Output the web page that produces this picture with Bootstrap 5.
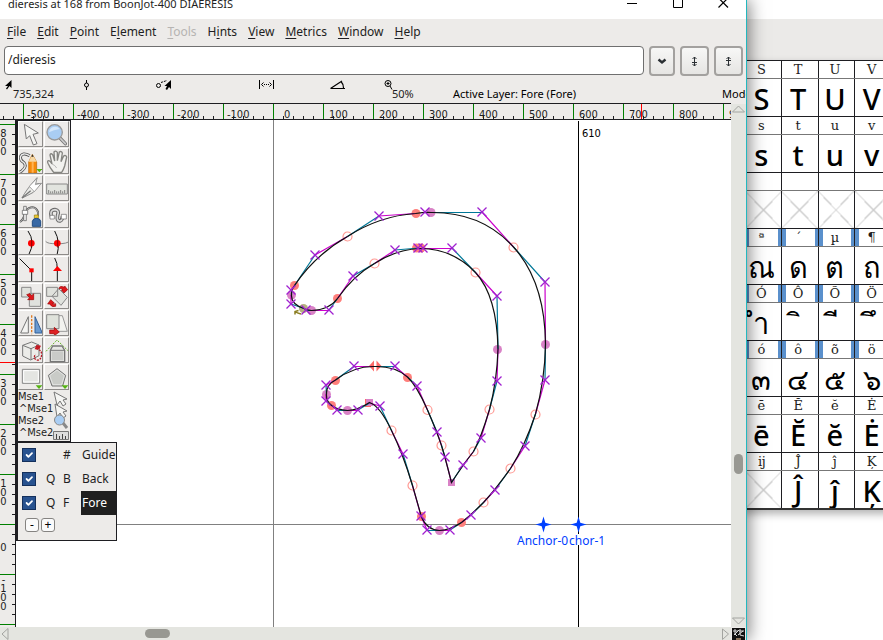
<!DOCTYPE html>
<html lang="en">
<head>
<meta charset="utf-8">
<meta name="viewport" content="width=device-width, initial-scale=1">
<title>dieresis at 168 from BoonJot-400</title>
<link href="https://cdn.jsdelivr.net/npm/bootstrap@5.3.0/dist/css/bootstrap.min.css" rel="stylesheet">
<style>
:root{--chrome:#edebe9;--ink:#1e1e22;--trough:#e4e5e0}
body{font:12px/16px "Noto Sans","Open Sans",sans-serif;color:var(--ink);background:#fff}
.editor{min-width:0;border-right:1px solid #22b8bf;box-shadow:2px 0 16px rgba(0,0,0,.5);z-index:2;background:var(--chrome)}
.titlebar,.menus,.entry,.status{flex:none}
.titlebar{height:19px;background:#fff;padding-left:8px}
.titlebar .caption{margin-top:-4px;font-size:11px;white-space:nowrap}
.titlebar button,.menus button,.tool,.scroll button{border:0;background:none;padding:0;color:inherit;line-height:inherit}
.winctl{gap:35px;padding-right:17px}
.winctl button{display:flex}
.winctl svg,.tool svg,.scroll svg,.status svg,.bindings svg{display:block;flex:none}
.menus{height:27px;gap:11px;padding:0 0 2px 7px}
.menus button:disabled{color:#b6b4b2}
.menus u{text-underline-offset:2px}
.entry{gap:5px;padding:0 3px 0 4px}
.entry input{height:29px;border:1px solid #6f6f6f;border-radius:4px;padding:0 3px 2px;font-size:12px;color:var(--ink);box-shadow:none}
.entry .btn{height:30px;width:29px;flex:none;padding:0;border:2px solid #a3a19f;border-radius:4px;background:linear-gradient(#f7f7f6,#e6e5e3);font-size:12px;line-height:12px}
.entry .btn:first-of-type{width:26px}
.status{height:27px;display:grid;grid-template-columns:79px 72px 103px 71px 54px 69px minmax(0,1fr) 24px;padding:4px 0 0 5px;font:11px/13px "Noto Sans",sans-serif;white-space:nowrap;overflow:hidden}
.status .reading{margin:-3px 0 0 8px}
.status .lower{padding-top:7px;color:#000}
.work{display:grid;grid-template-columns:minmax(0,1fr) 15px;grid-template-rows:17px minmax(0,1fr) 13px;min-height:0}
.hruler{border-top:1px solid var(--ink);border-bottom:1px solid var(--ink);padding-left:23px;overflow:hidden;position:relative;font:11px/21px "DejaVu Sans Condensed","DejaVu Sans",sans-serif;background:repeating-linear-gradient(90deg,var(--ink) 0 1px,transparent 1px 10px) 3px 12px/100% 3px no-repeat}
.hruler span{flex:0 0 50px;border-left:1px solid green;padding-left:3px}
.hruler .pos{padding-left:5px}
.hruler .zero{padding-left:10px}
.hruler i{position:absolute;left:641px;top:0;width:1px;height:15px;background:red}
.body-row{min-height:0}
.vruler{flex:0 0 16px;border-right:1px solid var(--ink);padding-top:4px;overflow:hidden;position:relative;font:11px/9px "DejaVu Sans Condensed","DejaVu Sans",sans-serif;background:repeating-linear-gradient(var(--ink) 0 1px,transparent 1px 10px) 12px 4px/3px 100% no-repeat}
.vruler span{flex:0 0 50px;border-top:1px solid green;padding-top:4px}
.vruler b{display:block;width:7px;font-weight:400;word-break:break-all;text-align:center}
.vruler .zero{padding-top:18px}
.vruler .neg{padding-top:0}
.vruler i{position:absolute;left:0;top:242px;width:15px;height:1px;background:red}
.canvas{background:#fff;position:relative;overflow:hidden}
.outline-view{position:absolute;inset:0;width:100%;height:100%}
.palettes{position:absolute;left:0;top:-1px}
.toolbox,.layers{border:1px solid var(--ink);background:var(--chrome);border-left-width:2px}
.toolbox{width:55px;border-top-width:2px}
.toolgrid{display:grid;grid-template-columns:1fr 1fr;grid-auto-rows:27px}
.toolgrid .tool{margin:0 1px 1px 0;border:1px solid;border-color:#fff #8d8b89 #8d8b89 #fff;overflow:hidden}
.bindings{font:11px/12px "DejaVu Sans Condensed","DejaVu Sans",sans-serif;height:50px;position:relative}
.bindings .shifted{padding-left:1px}
.bindings svg{position:absolute;right:1px;top:0}
.layers{width:101px;height:99px}
.layerrow{display:grid;grid-template-columns:24px 17px 18px 1fr;height:24px;align-items:center;padding-left:4px}
.layerrow .form-check-input{width:14px;height:14px;margin:0;border-radius:0;border:1px solid #14305c;box-shadow:none}
.layerrow .form-check-input:checked{background-color:#28528f}
.layerrow .lname{line-height:24px;padding-left:1px;font-size:12px}
.layerrow .active{background:#202020;color:#fff}
.pmrow{gap:2px;padding:3px 0 0 7px}
.pm{width:14px;height:14px;padding:0;border:1px solid #858381;border-radius:3px;background:#fafafa;font-size:12px;line-height:10px}
.scroll{background:var(--trough)}
.thumb{background:#989892;border-radius:5px}
.vscroll{grid-row:1/3;grid-column:2;margin-top:1px}
.vscroll .thumb{width:9px;height:20px}
.vscroll .before{flex:342 0 0}
.vscroll .after{flex:143 0 0}
.hscroll .thumb{height:9px;width:25px;margin-left:136px}
.fontview{flex:0 0 136px;overflow:hidden}
.fonthead{height:60px;background:linear-gradient(#fff 19px,#ebeae8 19px)}
.glyphs{width:148px;margin-left:-3px;table-layout:fixed;border-collapse:collapse;border-bottom:2px solid #333;box-shadow:0 4px 8px rgba(0,0,0,.3)}
.glyphs th,.glyphs td{padding:0 3px 0 0;text-align:center;border:1px solid var(--ink);overflow:hidden}
.glyphs th{height:18px;font:13px/17px "DejaVu Serif",serif;border-bottom-color:#777}
.glyphs td{height:38px;font:29px/40px "Noto Sans","DejaVu Sans",sans-serif;font-weight:500;color:#000;border-top-color:#777}
.glyphs td div{height:37px;overflow:hidden}
.glyphs .chosen th{box-shadow:inset 4px 0 #5a90cc,inset -3px 0 #5a90cc}
.glyphs .blank{background:linear-gradient(to top right,transparent 49%,#ccc 49% 51%,transparent 51%),linear-gradient(to bottom right,transparent 49%,#ccc 49% 51%,transparent 51%)}
</style>
</head>
<body class="vh-100 overflow-hidden d-flex">
<main class="editor d-flex flex-column flex-grow-1 position-relative">
  <header class="titlebar d-flex justify-content-between overflow-hidden">
    <div class="caption">dieresis at 168 from BoonJot-400 DIAERESIS</div>
    <div class="winctl d-flex">
      <button aria-label="Minimize"><svg width="11" height="19"><path d="M0 3.500H10" stroke="#000"/></svg></button>
      <button aria-label="Maximize"><svg width="10" height="19"><path d="M.5-2V7.500H9.500V-2z" fill="none" stroke="#000"/></svg></button>
      <button aria-label="Close"><svg width="11" height="19"><path d="M.5-2L10 7.500M10-2L.5 7.500" stroke="#000" stroke-width="1.200"/></svg></button>
    </div>
  </header>
  <nav class="menus d-flex align-items-center">
    <button><u>F</u>ile</button><button><u>E</u>dit</button><button><u>P</u>oint</button><button>E<u>l</u>ement</button><button disabled><u>T</u>ools</button><button>H<u>i</u>nts</button><button><u>V</u>iew</button><button><u>M</u>etrics</button><button><u>W</u>indow</button><button><u>H</u>elp</button>
  </nav>
  <div class="entry d-flex">
    <input class="form-control" type="text" value="/dieresis" aria-label="Glyph name">
    <button class="btn" aria-label="History"><svg width="10" height="7"><path d="M1.500 1.500L5 4.500L8.500 1.500" fill="none" stroke="#2a2f33" stroke-width="2.400"/></svg></button>
    <button class="btn" aria-label="Previous word"><svg width="7" height="11"><path d="M3.500 1V10M1.500 3L3.500 1L5.500 3M1.500 8L3.500 10L5.500 8M1 6.500H6" fill="none" stroke="#2a2f33"/></svg></button>
    <button class="btn" aria-label="Next word"><svg width="7" height="11"><path d="M3.500 1V10M1.500 3L3.500 1L5.500 3M1.500 8L3.500 10L5.500 8M1 4.500H6" fill="none" stroke="#2a2f33"/></svg></button>
  </div>
  <div class="status">
    <div><svg width="8" height="10"><path d="M6.500 0V8L4.500 6L2 9.500L1 8.500L3 6H0z"/></svg><div class="reading">735,324</div></div>
    <div><svg width="6" height="10"><path d="M2.500 0V10" stroke="#000"/><circle cx="2.500" cy="5" r="2" fill="#edebe9" stroke="#000"/></svg></div>
    <div><svg width="16" height="10"><circle cx="2.500" cy="5.500" r="2" fill="none" stroke="#000"/><path d="M5 2.500L11 .5" stroke="#000" stroke-dasharray="2 1"/><path d="M15 0V9L13 7L11 10L9.500 9L11 6H8.500z"/></svg></div>
    <div><svg width="16" height="9"><path d="M.5 0V9M14.500 0V9M5 4.500H6M7 4.500H8M9 4.500H10M4.500 2.500L2.500 4.500L4.500 6.500M10.500 2.500L12.500 4.500L10.500 6.500" fill="none" stroke="#000"/></svg></div>
    <div><svg width="16" height="10"><path d="M.5 8.500H15M.5 8.500L12 1M11 1.500Q13.500 4 13.500 8" fill="none" stroke="#000" stroke-width="1.200"/></svg></div>
    <div><svg width="9" height="10"><circle cx="4" cy="3.500" r="3" fill="none" stroke="#000"/><path d="M2.500 3.500H5.500M4 2V5M6 6L8 9.500" stroke="#000"/></svg><div class="reading">50%</div></div>
    <div class="lower">Active Layer: Fore (Fore)</div>
    <div class="lower">Mode</div>
  </div>
  <section class="work flex-grow-1">
    <div class="hruler d-flex"><span>-500</span><span>-400</span><span>-300</span><span>-200</span><span>-100</span><span class="zero">0</span><span class="pos">100</span><span class="pos">200</span><span class="pos">300</span><span class="pos">400</span><span class="pos">500</span><span class="pos">600</span><span class="pos">700</span><span class="pos">800</span><span class="pos">9</span><i></i></div>
    <div class="body-row d-flex">
      <div class="vruler d-flex flex-column"><span><b>800</b></span><span><b>700</b></span><span><b>600</b></span><span><b>500</b></span><span><b>400</b></span><span><b>300</b></span><span><b>200</b></span><span><b>100</b></span><span class="zero"><b>0</b></span><span class="neg"><b>- 100</b></span><span class="neg"></span><i></i></div>
      <div class="canvas flex-grow-1">
        <svg class="outline-view" role="img" aria-label="Glyph outline">
          <defs>
            <marker id="mx" markerUnits="userSpaceOnUse" markerWidth="12" markerHeight="12" refX="6" refY="6"><path d="M1.500 1.500L10.500 10.500M10.500 1.500L1.500 10.500" stroke="#a020d0" stroke-width="1.300"/></marker>
            <marker id="mo" markerUnits="userSpaceOnUse" markerWidth="12" markerHeight="12" refX="6" refY="6"><circle cx="6" cy="6" r="4.500" fill="none" stroke="#ff9a94" stroke-width="1.200"/></marker>
            <marker id="mr" markerUnits="userSpaceOnUse" markerWidth="12" markerHeight="12" refX="6" refY="6"><circle cx="6" cy="6" r="4.500" fill="#ff7f7b"/></marker>
            <marker id="mp" markerUnits="userSpaceOnUse" markerWidth="12" markerHeight="12" refX="6" refY="6"><circle cx="6" cy="6" r="4.500" fill="#d982c6"/></marker>
            <path id="star" d="M0-8L1.800-1.800L8 0L1.800 1.800L0 8L-1.800 1.800L-8 0L-1.800-1.800z" fill="#0040ff"/>
          </defs>
          <g transform="translate(-16 -120)" fill="none">
            <path d="M273.500 120V2000M0 524.500H3000" stroke="#808080"/>
            <path d="M578.500 121V2000" stroke="#000"/>
            <g marker-start="url(#mr)" marker-mid="url(#mr)" marker-end="url(#mr)"><path d="M416 213.500L294.500 285.500L337.500 298.500L416.500 248L421 248L335.500 380.500L407.500 377.500L331.500 405.500L421.500 516.500L461.500 522.500"/></g>
            <path d="M369 366L374 360.500V371.500zM381.500 366L376.500 360.500V371.500zM365 399H371V407H365z" fill="#ff6a68"/>
            <g marker-start="url(#mp)" marker-mid="url(#mp)" marker-end="url(#mp)"><path d="M431 212.500L545.500 344.500L497.500 349.500L291.500 295L311.500 310.500L326.500 394.500L347.500 410.500L439.500 530.500"/></g>
            <path d="M366 399H373V406H366zM448 479H455V486H448z" fill="#d982c6"/>
            <circle cx="303.500" cy="308.500" r="4.500" fill="#b5b080"/>
            <g marker-start="url(#mo)" marker-mid="url(#mo)" marker-end="url(#mo)"><path d="M347.500 236.500L374.500 263.500L513.500 247.500L475.500 272.500L535.500 414.500L510.500 468.500L483.500 502.500L412.500 485.500L391.500 430.500L427.500 410L441.500 445.500L473.500 451.500L489.500 409.500"/></g>
            <path d="M431 212.500H482M513.500 247L545 282M545.500 344L545 380M535.500 414L525 446M510.500 468.500L495 490M483.500 502.500L471 515M461.500 522.500L450 530M439.500 530.500H427M412.500 485.500L403 454M391.500 430.500L380 406M369.500 403L358 410M347.500 410.500H337M331 405L326 401M326.500 394L326 385M335.500 380L354 366.500M375 366.500H395M407.500 377L417 386M427.500 410L437 432M441.500 445.500L445 457M451.500 482.500L463 465M473.500 451.500L481 438M489.500 409.500L497 381M498 349L497 296M475.500 272.500L452 248M419 248L395 250M374.500 263.500L353 276M337.500 298.500L329 310M311 310.500H306M304 308.500L291 304M291.500 295V290M294.500 285.500L315 255M347.500 236.500L379 216" stroke="#007898" stroke-width="1.200"/>
            <path d="M482 212L513.500 247M545 282.500L545.500 344M545 380L535.500 414M525 446L510.500 468.500M495 490L483.500 502.500M471 515L461.500 522.500M450 530.500H439.500M427 530L421 516L412.500 485.500M403 454L391.500 430.500M380 406L369.500 403M358 410.500H347.500M337 410L331 405M326 401V394M326 385L335.500 380M354 366.500H375M395 366.500L407.500 377M417 386L427.500 410M437 432L441.500 445.500M445 457L451.500 482.500M463 465L473.500 451.500M481 438L489.500 409.500M497 381L498 349M497 296L475.500 272.500M452 248.500H419M395 250L374.500 263.500M353 276L337.500 298.500M329 310.500H311M291 304V295M291 290L294.500 285.500M315 255L347.500 236.500M379 216L415.500 213.500" stroke="#cc00cc" stroke-width="1.200"/>
            <path d="M431 212.500Q482 212 513.500 247Q545 282 545.500 344Q545 380 535.500 414Q525 446 510.500 468.500Q495 490 483.500 502.500Q471 515 461.500 522.500Q450 530 439.500 530.500Q427 530 421.500 517Q421 515 412.500 485.500Q403 454 391.500 430.500Q380 406 369.500 402.500Q358 410 347.500 410.500Q337 410 331 405Q326 401 326.500 394Q326 385 335.500 380Q354 366 375 366.500Q395 366 407.500 377Q417 386 427.500 410Q437 432 441.500 445.500Q445 457 451.500 482.500Q463 465 473.500 451.500Q481 438 489.500 409.500Q497 381 498 349Q497 296 475.500 272.500Q452 248 419 248.500Q395 250 374.500 263.500Q353 276 337.500 298.500Q329 310 311.500 310.500Q306 310 304 308.500Q291 304 291.500 295Q291 290 294.500 285.500Q315 255 347.500 236.500Q379 216 415.500 213.500Q425 212 431 212.500z" stroke="#101010" stroke-width="1.200"/>
            <g marker-start="url(#mx)" marker-mid="url(#mx)" marker-end="url(#mx)"><path d="M425 212L482 212L545 282L545 380L525 446L495 490L471 515L450 530L427 530L421 516L403 454L380 406L358 410L337 410L326 401L326 385L354 366L395 366L417 386L437 432L445 457L463 465L481 438L497 381L497 296L452 248L423 248L418 248L395 250L353 276L329 310L306 310L291 304L291 290L315 255L379 216"/></g>
            <path d="M301 314Q297 313 295 311.500M295 314.500V311.500L298.500 310.500" stroke="#8a7d20" stroke-width="1.500"/>
            <path d="M517 534H604V545H517z" fill="#fff"/>
            <g font-family="Noto Sans,sans-serif" font-size="12" fill="#0040ff"><text x="517" y="545">Anchor-0</text><text x="569" y="545">chor-1</text></g>
            <text x="582" y="137" font-family="DejaVu Sans Condensed,DejaVu Sans,sans-serif" font-size="11" fill="#000">610</text>
            <use href="#star" x="543.500" y="524.500"/><use href="#star" x="578.500" y="524.500"/>
          </g>
        </svg>
        <aside class="palettes">
          <div class="toolbox">
            <div class="toolgrid">
              <button class="tool" aria-label="Pointer"><svg viewBox="0 0 75 75" width="25" height="25"><path d="M16 7L22 51L32 41L43 69L54 65L42 37L58 33z" fill="#f5f5f3" stroke="#777" stroke-width="3"/></svg></button>
              <button class="tool" aria-label="Magnify"><svg viewBox="0 0 75 75" width="25" height="25"><path d="M45 48L61 65" stroke="#777" stroke-width="10" stroke-linecap="round"/><path d="M45 48L61 65" stroke="#ccc" stroke-width="5" stroke-linecap="round"/><circle cx="29" cy="31" r="23" fill="#a9cdf3" stroke="#999" stroke-width="4"/><path d="M12 31A18 18 0 0 1 44 21Q26 24 12 31z" fill="#d4e7fb"/></svg></button>
              <button class="tool" aria-label="Freehand"><svg viewBox="0 0 75 75" width="25" height="25"><path d="M32 20Q10 8 4 24Q4 36 14 40Q26 52 8 66L3 69" fill="none" stroke="#555" stroke-width="9"/><path d="M32 20Q10 8 4 24Q4 36 14 40Q26 52 8 66L3 69" fill="none" stroke="#eee" stroke-width="4"/><path d="M29 39L40 16L53 39V72H29z" fill="#f58a0b" stroke="#b56405" stroke-width="2"/><path d="M29 38L40 16L53 38z" fill="#f6d8a4"/><path d="M37 23L40 16L44 23z" fill="#222"/><path d="M41 39V71" stroke="#ffb454" stroke-width="6"/><path d="M52 60H70L61 70z" fill="#54b313"/></svg></button>
              <button class="tool" aria-label="Hand"><svg viewBox="0 0 75 75" width="25" height="25"><path d="M23 66Q15 57 9 43Q6 35 11 35Q15 35 21 45L15 18Q17 11 23 17L29 36L27 9Q32 3 37 10V35L43 9Q49 5 52 12L48 38L56 21Q62 17 65 24L59 51Q56 61 50 70H26z" fill="#f2f2ef" stroke="#858581" stroke-width="4"/><path d="M21 45Q30 48 35 57" fill="none" stroke="#999" stroke-width="2"/></svg></button>
              <button class="tool" aria-label="Knife"><svg viewBox="0 0 75 75" width="25" height="25"><path d="M9 66Q20 43 54 5L49 24L67 22L43 49Q27 58 9 66z" fill="#ecece9" stroke="#888" stroke-width="3"/><path d="M31 31L46 47L67 22L49 26L54 7z" fill="#fff" stroke="#888" stroke-width="2"/><path d="M9 66L35 44" stroke="#777" stroke-width="4"/></svg></button>
              <button class="tool" aria-label="Ruler"><svg viewBox="0 0 75 75" width="25" height="25"><path d="M5 24H67V54H5z" fill="#e2e4df" stroke="#888" stroke-width="3"/><path d="M11 52V42M17 52V46M23 52V46M29 52V42M35 52V46M41 52V46M47 52V42M53 52V46M59 52V42" stroke="#555" stroke-width="2"/></svg></button>
              <button class="tool" aria-label="Pen"><svg viewBox="0 0 75 75" width="25" height="25"><path d="M3 57Q17 48 17 25Q45 0 57 27V40" fill="none" stroke="#555" stroke-width="6"/><path d="M3 57Q17 48 17 25Q45 0 57 27V40" fill="none" stroke="#ddd" stroke-width="2"/><path d="M14 10H22V53H14z" fill="#eee" stroke="#555" stroke-width="2"/><path d="M10 22H26V34H10z" fill="#fff" stroke="#555" stroke-width="2"/><path d="M46 36H58V46H46z" fill="#eecb35" stroke="#947a08" stroke-width="2"/><path d="M40 70V55Q42 46 52 46Q64 46 65 55V70z" fill="#3969a5" stroke="#234d82" stroke-width="3"/></svg></button>
              <button class="tool" aria-label="Spiro"><svg viewBox="0 0 75 75" width="25" height="25"><path d="M20 43Q12 21 30 20Q44 22 38 36Q34 55 45 54Q53 52 52 39" fill="none" stroke="#666" stroke-width="11"/><path d="M20 43Q12 21 30 20Q44 22 38 36Q34 55 45 54Q53 52 52 39" fill="none" stroke="#ddd" stroke-width="5"/><path d="M15 37H28V48H15zM49 34H64V48H49z" fill="#fff" stroke="#666" stroke-width="2"/></svg></button>
              <button class="tool" aria-label="Curve point"><svg viewBox="0 0 75 75" width="25" height="25"><path d="M27 3Q50 35 29 75" fill="none" stroke="#111" stroke-width="3"/><circle cx="37" cy="40" r="10" fill="red"/><path d="M38 28V53" stroke="#500" stroke-width="2"/></svg></button>
              <button class="tool" aria-label="HV curve point"><svg viewBox="0 0 75 75" width="25" height="25"><path d="M2 34Q7 42 37 41Q68 42 74 32" fill="none" stroke="#888" stroke-width="3"/><path d="M29 3Q47 35 36 75" fill="none" stroke="#111" stroke-width="3"/><circle cx="37" cy="40" r="10" fill="red"/><path d="M38 28V53" stroke="#500" stroke-width="2"/></svg></button>
              <button class="tool" aria-label="Corner point"><svg viewBox="0 0 75 75" width="25" height="25"><path d="M2 5L38 41V75" fill="none" stroke="#111" stroke-width="3"/><path d="M31 34H44V46H31z" fill="red"/></svg></button>
              <button class="tool" aria-label="Tangent point"><svg viewBox="0 0 75 75" width="25" height="25"><path d="M29 3Q38 17 37 40V75" fill="none" stroke="#111" stroke-width="3"/><path d="M24 42L37 27L51 42z" fill="red"/></svg></button>
              <button class="tool" aria-label="Scale"><svg viewBox="0 0 75 75" width="25" height="25"><path d="M8 10H36V39H8zM31 28H65V67H31z" fill="#e0e2dd" stroke="#888" stroke-width="3"/><path d="M23 32L32 29L38 35L44 29V47H26L32 41z" fill="#df171b" stroke="#900" stroke-width="2"/></svg></button>
              <button class="tool" aria-label="Rotate"><svg viewBox="0 0 75 75" width="25" height="25"><path d="M5 10H38V37H5zM41 14L67 40L48 64L21 37z" fill="#e0e2dd" stroke="#888" stroke-width="3"/><path d="M42 14Q43 3 59 10V6L68 17L57 27L49 18L54 17Q49 12 42 14zM32 67Q20 72 14 60H8L17 47L28 57L22 59Q26 62 32 59z" fill="#df171b" stroke="#900" stroke-width="2"/></svg></button>
              <button class="tool" aria-label="Flip"><svg viewBox="0 0 75 75" width="25" height="25"><path d="M5 66L28 17V66z" fill="#f4f4f2" stroke="#777" stroke-width="3"/><path d="M38 13V70" stroke="#df7a22" stroke-width="4" stroke-dasharray="7 4"/><path d="M48 66V17L70 66z" fill="#6a9ad0" stroke="#315f98" stroke-width="3"/></svg></button>
              <button class="tool" aria-label="Skew"><svg viewBox="0 0 75 75" width="25" height="25"><path d="M19 14H52L67 61H32z" fill="#f3f3f0" stroke="#999" stroke-width="3"/><path d="M5 11H42V53H5z" fill="#dfe2db" stroke="#888" stroke-width="3"/><path d="M14 57H28V49L43 63L28 74V68H14z" fill="#df2024" stroke="#900" stroke-width="2"/></svg></button>
              <button class="tool" aria-label="3D rotate"><svg viewBox="0 0 75 75" width="25" height="25"><path d="M11 22L38 12L60 21V53L35 66L11 54z" fill="#ecece9" stroke="#777" stroke-width="3"/><path d="M11 22L36 32L60 21M36 32V66" fill="none" stroke="#777" stroke-width="3"/><path d="M51 32Q68 35 68 50Q66 68 53 66Q42 62 49 48" fill="none" stroke="#b91822" stroke-width="4" stroke-dasharray="6 3"/><path d="M47 34L52 21L66 23L61 34z" fill="#c51822"/></svg></button>
              <button class="tool" aria-label="Perspective"><svg viewBox="0 0 75 75" width="25" height="25"><path d="M3 40L36 6L73 42" fill="none" stroke="#66b429" stroke-width="3" stroke-dasharray="6 4"/><path d="M16 37L23 24H51L59 37V71H16z" fill="#e7e7e4" stroke="#777" stroke-width="4"/><path d="M16 37H59" stroke="#777" stroke-width="3"/><path d="M20 40H55V67H20z" fill="#cacbc8"/></svg></button>
              <button class="tool" aria-label="Rectangle"><svg viewBox="0 0 75 75" width="25" height="25"><path d="M10 13H62V55H10z" fill="#e4e5e2" stroke="#888" stroke-width="3"/><path d="M14 17H58V51H14z" fill="none" stroke="#fff" stroke-width="3"/><path d="M50 61H70L60 72z" fill="#54b313"/></svg></button>
              <button class="tool" aria-label="Polygon"><svg viewBox="0 0 75 75" width="25" height="25"><path d="M36 11L62 31L53 63H21L10 31z" fill="#c9cbc7" stroke="#777" stroke-width="3"/><path d="M36 15L58 32L50 59H24L14 32z" fill="none" stroke="#eee" stroke-width="2"/><path d="M50 61H70L60 72z" fill="#54b313"/></svg></button>
            </div>
            <div class="bindings">
              <div>Mse1</div><div class="shifted">^Mse1</div><div>Mse2</div><div class="shifted">^Mse2</div>
              <svg width="16" height="49"><path d="M1 1L4 14L7 10L10 15L13 13L10 9L14 8zM2 13L4 26L7 22L10 27L13 25L10 21L14 20z" fill="#f5f5f3" stroke="#777"/><path d="M10 32L14 37" stroke="#888" stroke-width="3"/><circle cx="6.500" cy="29" r="5" fill="#a9cdf3" stroke="#888"/><path d="M.5 40.500H15.500V48.500H.5z" fill="#ddd" stroke="#777"/><path d="M3.500 48V43M6.500 48V45M9.500 48V43M12.500 48V45" stroke="#444"/></svg>
            </div>
          </div>
          <div class="layers">
            <div class="layerrow"><input class="form-check-input" type="checkbox" id="lg" checked><span></span><span>#</span><label class="lname" for="lg">Guide</label></div>
            <div class="layerrow"><input class="form-check-input" type="checkbox" id="lb" checked><span>Q</span><span>B</span><label class="lname" for="lb">Back</label></div>
            <div class="layerrow"><input class="form-check-input" type="checkbox" id="lf" checked><span>Q</span><span>F</span><label class="lname active" for="lf">Fore</label></div>
            <div class="pmrow d-flex"><button class="pm" aria-label="Remove layer">-</button><button class="pm" aria-label="Add layer">+</button></div>
          </div>
        </aside>
      </div>
    </div>
    <div class="scroll vscroll d-flex flex-column align-items-center">
      <button aria-label="Scroll up"><svg width="15" height="9"><path d="M1.500 8L7.500 2L13.500 8z" fill="none" stroke="#a3a4a0"/></svg></button>
      <div class="flex-grow-1 d-flex flex-column"><div class="before"></div><div class="thumb"></div><div class="after"></div></div>
      <button aria-label="Scroll down"><svg width="15" height="10"><path d="M1.500 1L7.500 7L13.500 1z" fill="none" stroke="#a3a4a0"/></svg></button>
    </div>
    <div class="scroll hscroll d-flex align-items-center">
      <button aria-label="Scroll left"><svg width="9" height="13"><path d="M8 1.500L2 7L8 12.500z" fill="none" stroke="#a3a4a0"/></svg></button>
      <div class="flex-grow-1"><div class="thumb"></div></div>
      <button aria-label="Scroll right"><svg width="10" height="13"><path d="M1.500 2L7.500 7L1.500 12.500z" fill="none" stroke="#a3a4a0"/></svg></button>
    </div>
    <svg width="15" height="13"><path d="M1 1H14V13H1z" fill="#111"/><path d="M2 4H7M4 2V7L6 9M8 4H13M9 2V8L13 9M3 8L8 3M7 8L12 4" stroke="#ddd" fill="none"/><path d="M5 11H10V13H5z" fill="#8b735b"/></svg>
  </section>
</main>
<aside class="fontview">
  <div class="fonthead"></div>
  <table class="glyphs">
    <tr><th>S</th><th>T</th><th>U</th><th>V</th></tr>
    <tr><td><div>S</div></td><td><div>T</div></td><td><div>U</div></td><td><div>V</div></td></tr>
    <tr><th>s</th><th>t</th><th>u</th><th>v</th></tr>
    <tr><td><div>s</div></td><td><div>t</div></td><td><div>u</div></td><td><div>v</div></td></tr>
    <tr><th></th><th></th><th></th><th></th></tr>
    <tr><td class="blank"></td><td class="blank"></td><td class="blank"></td><td class="blank"></td></tr>
    <tr class="chosen"><th>ª</th><th>´</th><th>µ</th><th>¶</th></tr>
    <tr><td><div>ณ</div></td><td><div>ด</div></td><td><div>ต</div></td><td><div>ถ</div></td></tr>
    <tr class="chosen"><th>Ó</th><th>Ô</th><th>Õ</th><th>Ö</th></tr>
    <tr><td><div>ำ</div></td><td><div>&nbsp;ิ</div></td><td><div>&nbsp;ี</div></td><td><div>&nbsp;ึ</div></td></tr>
    <tr class="chosen"><th>ó</th><th>ô</th><th>õ</th><th>ö</th></tr>
    <tr><td><div>๓</div></td><td><div>๔</div></td><td><div>๕</div></td><td><div>๖</div></td></tr>
    <tr><th>ē</th><th>Ĕ</th><th>ĕ</th><th>Ė</th></tr>
    <tr><td><div>ē</div></td><td><div>Ĕ</div></td><td><div>ĕ</div></td><td><div>Ė</div></td></tr>
    <tr><th>ĳ</th><th>Ĵ</th><th>ĵ</th><th>Ķ</th></tr>
    <tr><td class="blank"></td><td><div>Ĵ</div></td><td><div>ĵ</div></td><td><div>Ķ</div></td></tr>
  </table>
</aside>
<script src="https://cdn.jsdelivr.net/npm/bootstrap@5.3.0/dist/js/bootstrap.bundle.min.js"></script>
</body>
</html>
